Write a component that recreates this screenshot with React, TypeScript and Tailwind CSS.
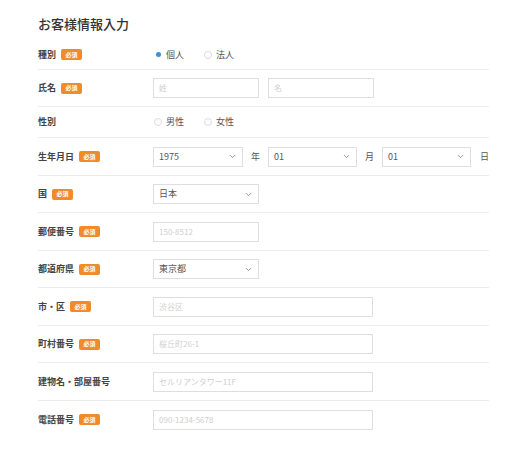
import { ChevronDown } from "lucide-react";

const font = "font-['Noto_Sans_CJK_JP','Noto_Sans',sans-serif]";

function Badge() {
  return (
    <span className="ml-[5px] inline-flex h-[11px] w-[21px] items-center justify-center rounded-[2px] bg-[#f08a2b] text-[6px] leading-none text-white">
      必須
    </span>
  );
}

function Row({
  label,
  required,
  h = "h-[37px]",
  last,
  children,
}: {
  label: string;
  required?: boolean;
  h?: string;
  last?: boolean;
  children: React.ReactNode;
}) {
  return (
    <div className={`flex items-center ${h} ${last ? "" : "border-b border-[#ececec]"}`}>
      <div className="flex w-[115px] shrink-0 items-center text-[9px] font-bold text-[#444]">
        {label}
        {required && <Badge />}
      </div>
      <div className="flex items-center">{children}</div>
    </div>
  );
}

function Input({ placeholder, wide }: { placeholder: string; wide?: boolean }) {
  return (
    <div
      className={`flex h-[20px] items-center border border-[#dedede] bg-white px-[5px] text-[8px] text-[#cfcfcf] ${
        wide ? "w-[220px]" : "w-[106px]"
      }`}
    >
      {placeholder}
    </div>
  );
}

function Select({ value, w = "w-[106px]" }: { value: string; w?: string }) {
  return (
    <div className={`flex h-[20px] shrink-0 items-center justify-between border border-[#dedede] bg-white pl-[5px] pr-[5px] text-[9px] text-[#555] ${w}`}>
      <span>{value}</span>
      <ChevronDown className="h-[9px] w-[9px] text-[#777]" strokeWidth={2} />
    </div>
  );
}

function Radio({ label, checked }: { label: string; checked?: boolean }) {
  return (
    <label className="flex items-center gap-[4px] text-[9px] text-[#555]">
      {checked ? (
        <span className="flex h-[8px] w-[8px] items-center justify-center rounded-full">
          <span className="h-[5px] w-[5px] rounded-full bg-[#3f8fd2]" />
        </span>
      ) : (
        <span className="h-[8px] w-[8px] rounded-full border border-[#dcdcdc] bg-white" />
      )}
      {label}
    </label>
  );
}

export default function App() {
  return (
    <div className={`${font} min-h-[450px] w-[518px] bg-white pl-[38px] pt-[14px]`}>
      <div className="w-[451px]">
        <h1 className="h-[20px] text-[13px] font-medium leading-[20px] text-[#333]">お客様情報入力</h1>
        <div className="mt-[6px]">
          <Row label="種別" required h="h-[30px]">
            <div className="flex items-center gap-[20px] pl-[1px]">
              <Radio label="個人" checked />
              <Radio label="法人" />
            </div>
          </Row>
          <Row label="氏名" required>
            <div className="flex gap-[9px]">
              <Input placeholder="姓" />
              <Input placeholder="名" />
            </div>
          </Row>
          <Row label="性別" h="h-[31px]">
            <div className="flex items-center gap-[20px] pl-[1px]">
              <Radio label="男性" />
              <Radio label="女性" />
            </div>
          </Row>
          <Row label="生年月日" required h="h-[38px]">
            <div className="flex items-center text-[9px] text-[#555]">
              <Select value="1975" w="w-[90px]" />
              <span className="w-[25px] shrink-0 text-center">年</span>
              <Select value="01" w="w-[89px]" />
              <span className="w-[25px] shrink-0 text-center">月</span>
              <Select value="01" w="w-[89px]" />
              <span className="w-[18px] shrink-0 text-right">日</span>
            </div>
          </Row>
          <Row label="国" required>
            <Select value="日本" />
          </Row>
          <Row label="郵便番号" required h="h-[38px]">
            <Input placeholder="150-8512" />
          </Row>
          <Row label="都道府県" required>
            <Select value="東京都" />
          </Row>
          <Row label="市・区" required h="h-[38px]">
            <Input placeholder="渋谷区" wide />
          </Row>
          <Row label="町村番号" required>
            <Input placeholder="桜丘町26-1" wide />
          </Row>
          <Row label="建物名・部屋番号" h="h-[38px]">
            <Input placeholder="セルリアンタワー11F" wide />
          </Row>
          <Row label="電話番号" required last>
            <Input placeholder="090-1234-5678" wide />
          </Row>
        </div>
      </div>
    </div>
  );
}
